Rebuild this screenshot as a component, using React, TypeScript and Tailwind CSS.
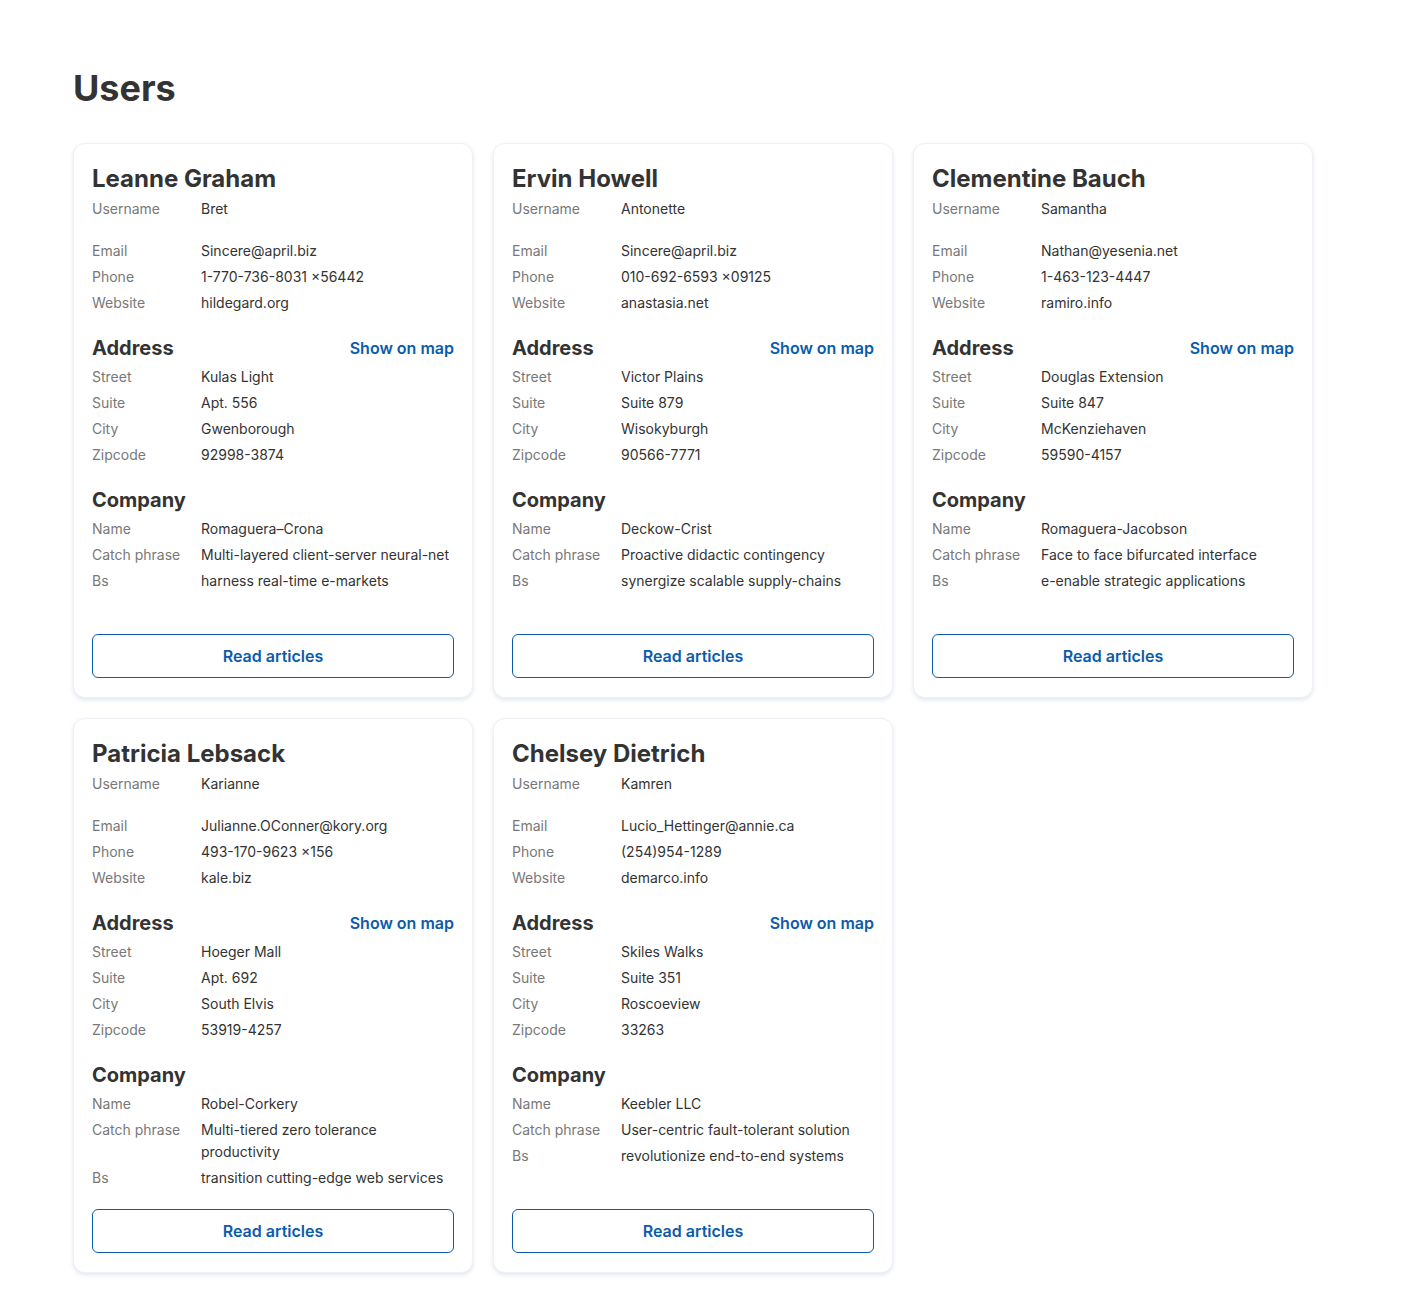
const users = [
  {
    name: "Leanne Graham",
    username: "Bret",
    email: "Sincere@april.biz",
    phone: "1-770-736-8031 ×56442",
    website: "hildegard.org",
    street: "Kulas Light",
    suite: "Apt. 556",
    city: "Gwenborough",
    zipcode: "92998-3874",
    company: "Romaguera–Crona",
    catchPhrase: "Multi-layered client-server neural-net",
    bs: "harness real-time e-markets",
  },
  {
    name: "Ervin Howell",
    username: "Antonette",
    email: "Sincere@april.biz",
    phone: "010-692-6593 ×09125",
    website: "anastasia.net",
    street: "Victor Plains",
    suite: "Suite 879",
    city: "Wisokyburgh",
    zipcode: "90566-7771",
    company: "Deckow-Crist",
    catchPhrase: "Proactive didactic contingency",
    bs: "synergize scalable supply-chains",
  },
  {
    name: "Clementine Bauch",
    username: "Samantha",
    email: "Nathan@yesenia.net",
    phone: "1-463-123-4447",
    website: "ramiro.info",
    street: "Douglas Extension",
    suite: "Suite 847",
    city: "McKenziehaven",
    zipcode: "59590-4157",
    company: "Romaguera-Jacobson",
    catchPhrase: "Face to face bifurcated interface",
    bs: "e-enable strategic applications",
  },
  {
    name: "Patricia Lebsack",
    username: "Karianne",
    email: "Julianne.OConner@kory.org",
    phone: "493-170-9623 ×156",
    website: "kale.biz",
    street: "Hoeger Mall",
    suite: "Apt. 692",
    city: "South Elvis",
    zipcode: "53919-4257",
    company: "Robel-Corkery",
    catchPhrase: "Multi-tiered zero tolerance productivity",
    bs: "transition cutting-edge web services",
  },
  {
    name: "Chelsey Dietrich",
    username: "Kamren",
    email: "Lucio_Hettinger@annie.ca",
    phone: "(254)954-1289",
    website: "demarco.info",
    street: "Skiles Walks",
    suite: "Suite 351",
    city: "Roscoeview",
    zipcode: "33263",
    company: "Keebler LLC",
    catchPhrase: "User-centric fault-tolerant solution",
    bs: "revolutionize end-to-end systems",
  },
];

type User = (typeof users)[number];

function Rows({ rows }: { rows: [string, string][] }) {
  return (
    <dl className="grid grid-cols-[109px_1fr] gap-y-1 text-sm leading-[22px]">
      {rows.map(([label, value]) => (
        <div key={label} className="contents">
          <dt className="text-[#787878]">{label}</dt>
          <dd className="text-[#333333]">{value}</dd>
        </div>
      ))}
    </dl>
  );
}

function UserCard({ user }: { user: User }) {
  return (
    <div className="flex flex-col bg-white rounded-xl border border-[#eef1f6] shadow-[0_2px_4px_rgba(20,60,120,0.13)] px-[18px] pt-[19px] pb-[19px]">
      <h2 className="text-2xl leading-8 font-bold text-[#333333]">{user.name}</h2>

      <div className="mt-[3px]">
        <Rows rows={[["Username", user.username]]} />
      </div>

      <div className="mt-5">
        <Rows
          rows={[
            ["Email", user.email],
            ["Phone", user.phone],
            ["Website", user.website],
          ]}
        />
      </div>

      {/* Address */}
      <div className="mt-5 flex items-center justify-between">
        <h3 className="text-xl leading-7 font-bold text-[#333333]">Address</h3>
        <a href="#" className="text-base font-semibold text-[#0b5cab]">
          Show on map
        </a>
      </div>
      <div className="mt-1">
        <Rows
          rows={[
            ["Street", user.street],
            ["Suite", user.suite],
            ["City", user.city],
            ["Zipcode", user.zipcode],
          ]}
        />
      </div>

      {/* Company */}
      <h3 className="mt-5 text-xl leading-7 font-bold text-[#333333]">Company</h3>
      <div className="mt-1">
        <Rows
          rows={[
            ["Name", user.company],
            ["Catch phrase", user.catchPhrase],
            ["Bs", user.bs],
          ]}
        />
      </div>

      <div className="mt-auto pt-5">
        <button
          type="button"
          className="w-full h-11 rounded-md border border-[#0b5cab] text-base font-semibold text-[#0b5cab] bg-white"
        >
          Read articles
        </button>
      </div>
    </div>
  );
}

export default function App() {
  return (
    <div className="min-h-screen bg-white px-[73px] pt-[68px] pb-5 font-['Inter',sans-serif]">
      <h1 className="text-4xl leading-10 font-bold text-[#333333]">Users</h1>
      <div className="mt-[35px] grid grid-cols-[repeat(3,400px)] auto-rows-fr gap-5">
        {users.map((u) => (
          <UserCard key={u.name} user={u} />
        ))}
      </div>
    </div>
  );
}
